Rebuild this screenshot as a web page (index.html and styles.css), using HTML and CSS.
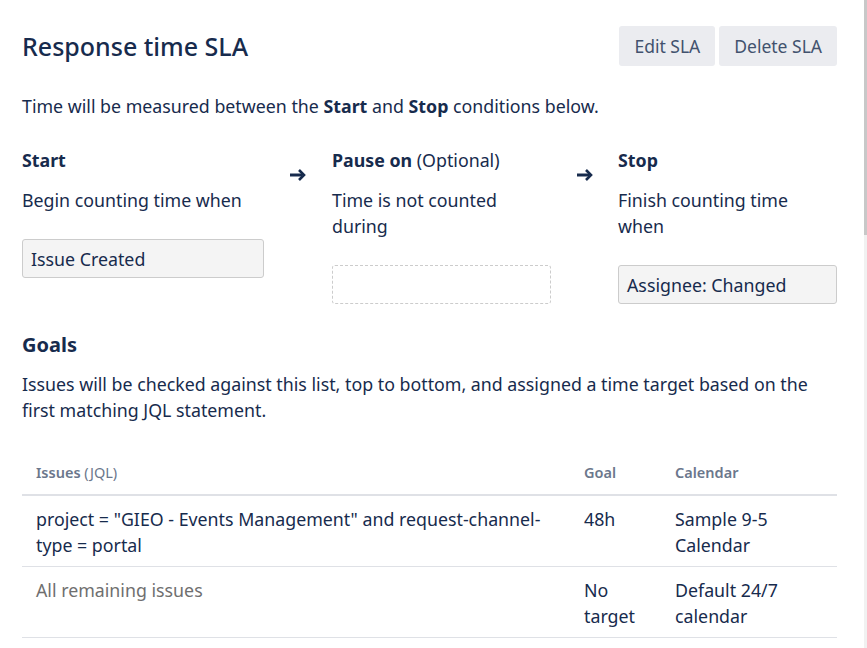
FILE: index.html
```html
<!DOCTYPE html>
<html lang="en">
<head>
<meta charset="UTF-8" />
<meta name="viewport" content="width=device-width, initial-scale=1.0">
<title>Response time SLA</title>
<link rel="stylesheet" href="styles.css">
</head>
<body>

<div class="sla-page">
  <!-- Header -->
  <div class="sla-header">
    <h1>Response time SLA</h1>
    <div class="sla-actions">
      <button>Edit SLA</button>
      <button>Delete SLA</button>
    </div>
  </div>

  <p class="intro">Time will be measured between the <b>Start</b> and <b>Stop</b> conditions below.</p>

  <!-- Conditions -->
  <div class="conditions">
    <div class="condition">
      <h3>Start</h3>
      <p>Begin counting time when</p>
      <div class="cond-box">Issue Created</div>
    </div>
    <div class="arrow">
      <svg width="16" height="12" viewBox="0 0 16 12"><path d="M0 6h12" stroke="#172b4d" stroke-width="3"/><path d="M9 1l5 5-5 5" fill="none" stroke="#172b4d" stroke-width="2.6"/></svg>
    </div>
    <div class="condition">
      <h3>Pause on <span class="optional">(Optional)</span></h3>
      <p>Time is not counted during</p>
      <div class="cond-box empty"></div>
    </div>
    <div class="arrow">
      <svg width="16" height="12" viewBox="0 0 16 12"><path d="M0 6h12" stroke="#172b4d" stroke-width="3"/><path d="M9 1l5 5-5 5" fill="none" stroke="#172b4d" stroke-width="2.6"/></svg>
    </div>
    <div class="condition">
      <h3>Stop</h3>
      <p>Finish counting time when</p>
      <div class="cond-box">Assignee: Changed</div>
    </div>
  </div>

  <!-- Goals -->
  <h2>Goals</h2>
  <p class="goals-desc">Issues will be checked against this list, top to bottom, and assigned a time target based on the first matching JQL statement.</p>

  <table class="goals">
    <thead>
      <tr>
        <th class="col-jql">Issues <span class="light">(JQL)</span></th>
        <th class="col-goal">Goal</th>
        <th>Calendar</th>
      </tr>
    </thead>
    <tbody>
      <tr>
        <td>project = "GIEO - Events Management" and request-channel-type = portal</td>
        <td>48h</td>
        <td>Sample 9-5 Calendar</td>
      </tr>
      <tr>
        <td class="muted">All remaining issues</td>
        <td>No target</td>
        <td>Default 24/7 calendar</td>
      </tr>
    </tbody>
  </table>
</div>

<div class="scrollbar"><div class="thumb"></div></div>

</body>
</html>
```

FILE: styles.css
```css
* {
  box-sizing: border-box;
  margin: 0;
  padding: 0;
}
body {
  font-family: 'Noto Sans', 'Open Sans', sans-serif;
  font-size: 17.8px;
  line-height: 26px;
  color: #172b4d;
  background: #fff;
}
.sla-page {
  width: 837px;
  padding: 26px 0 0 22px;
}
.sla-header {
  display: flex;
  justify-content: space-between;
  align-items: center;
  height: 40px;
}
h1 {
  font-size: 25px;
  font-weight: 500;
  line-height: 30px;
}
.sla-actions {
  display: flex;
  gap: 4px;
}
.sla-actions button {
  font-family: inherit;
  font-size: 17.5px;
  color: #42526e;
  background: #ebecf0;
  border: none;
  border-radius: 3px;
  height: 40px;
  padding: 0 15px;
}
.intro {
  margin-top: 27px;
}
.conditions {
  display: grid;
  grid-template-columns: 242px 68px 219px 67px 219px;
  margin-top: 28px;
}
.condition h3 {
  font-size: 17.8px;
  font-weight: 700;
}
.condition .optional {
  font-weight: 400;
}
.condition p {
  margin-top: 14px;
  padding-right: 20px;
}
.arrow {
  display: flex;
  justify-content: center;
  padding-top: 22px;
}
.cond-box {
  margin-top: 26px;
  height: 39px;
  background: #f4f4f4;
  border: 1px solid #ccc;
  border-radius: 3px;
  padding: 6px 8px;
}
.cond-box.empty {
  background: #fff;
  border: 1px dashed #ccc;
}
h2 {
  font-size: 20px;
  font-weight: 700;
  line-height: 28px;
  margin-top: 27px;
}
.goals-desc {
  margin-top: 12px;
  padding-right: 20px;
}
.goals {
  width: 815px;
  border-collapse: collapse;
  margin-top: 27px;
}
.goals th {
  font-size: 14.5px;
  font-weight: 600;
  color: #6b778c;
  text-align: left;
  padding: 9px 14px;
  border-bottom: 2px solid #dfe1e6;
}
.goals th .light {
  font-weight: 400;
}
.goals td {
  vertical-align: top;
  padding: 10px 14px 8px;
  border-bottom: 1px solid #dfe1e6;
}
.goals .col-jql {
  width: 548px;
}
.goals .col-goal {
  width: 91px;
}
.goals td.muted {
  color: #6f6f6f;
}
.scrollbar {
  position: fixed;
  top: 0;
  right: 0;
  width: 3px;
  height: 100%;
  background: #f1f1f1;
}
.scrollbar .thumb {
  height: 235px;
  background: #c8c8c8;
}
```
